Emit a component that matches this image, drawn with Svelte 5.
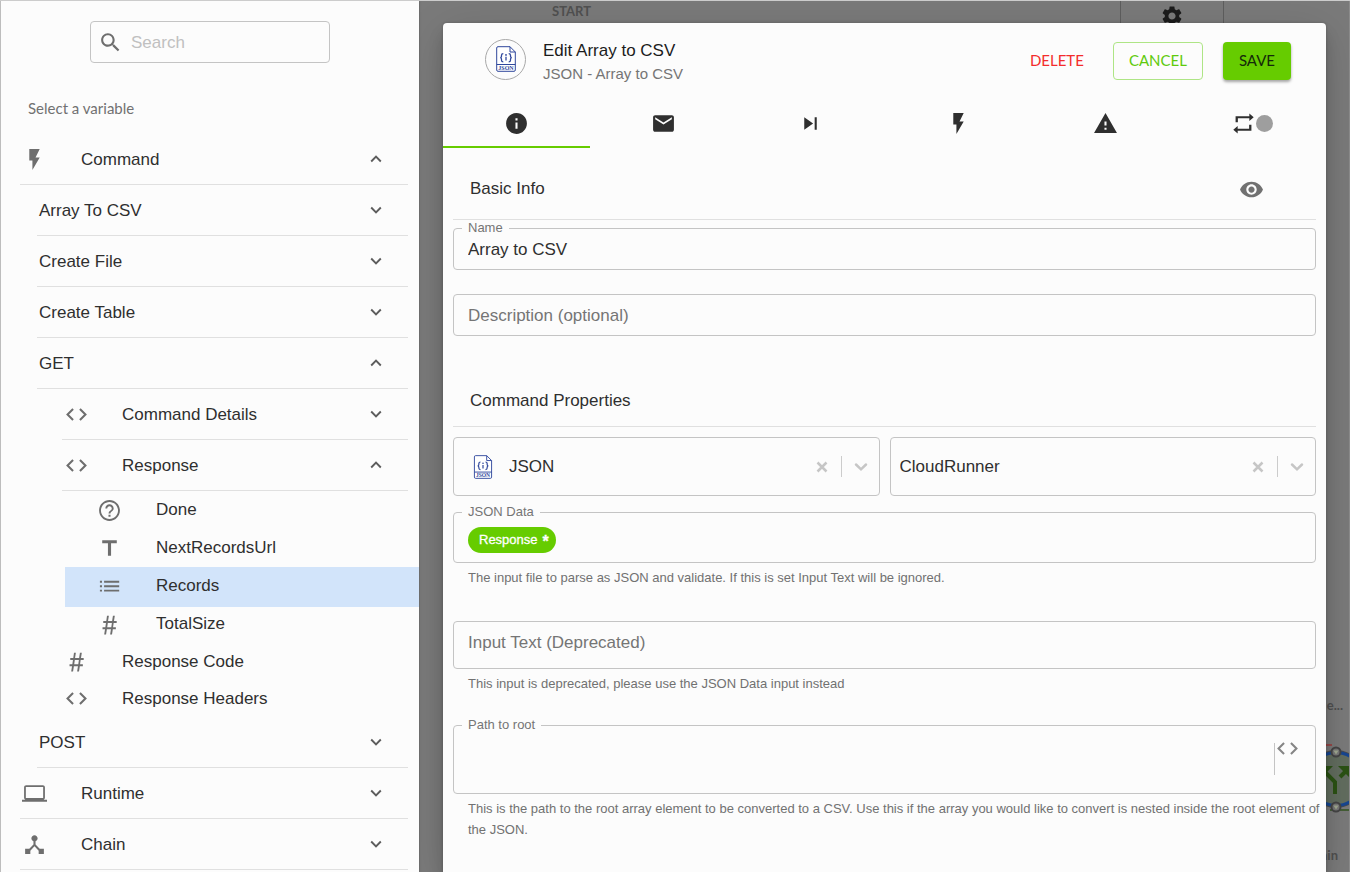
<script>
  const icons = {
    bolt: 'M7 2v11h3v9l7-12h-4l4-8z',
    code: 'M9.4 16.6L4.8 12l4.6-4.6L8 6l-6 6 6 6 1.4-1.4zm5.2 0l4.6-4.6-4.6-4.6L16 6l6 6-6 6-1.4-1.4z',
    help: 'M11 18h2v-2h-2v2zm1-16C6.48 2 2 6.48 2 12s4.48 10 10 10 10-4.48 10-10S17.52 2 12 2zm0 18.2c-4.53 0-8.2-3.67-8.2-8.2S7.47 3.8 12 3.8s8.2 3.67 8.2 8.2-3.67 8.2-8.2 8.2zM12 6c-2.21 0-4 1.79-4 4h1.8c0-1.2 1-2.2 2.2-2.2s2.2 1 2.2 2.2c0 2-3.1 1.85-3.1 5h1.8c0-2.25 3.1-2.5 3.1-5 0-2.21-1.79-4-4-4z',
    title: 'M5 4v3h5.5v12h3V7H19V4z',
    list: 'M2.800 6.400h2v1.900h-2zM2.800 10.700h2v1.900h-2zM2.800 15h2v1.900h-2zM6.800 6.400h14.500v1.900H6.800zM6.800 10.700h14.500v1.900H6.800zM6.800 15h14.500v1.900H6.800z',
    hash: 'M9.600 3.500h1.800L10.600 8.700h3.900l.8-5.200h1.800L16.300 8.700h2.600v1.800h-2.900l-.6 4.200h2.700v1.800h-2.900l-.8 5h-1.800l.8-5H9.500l-.8 5H6.900l.8-5H5.300v-1.800H8l.6-4.200H6V8.700h2.900zM10.400 10.500l-.6 4.200h3.900l.6-4.200z',
    laptop: 'M20 18c1.100 0 2-.9 2-2V6c0-1.100-.9-2-2-2H4c-1.100 0-2 .9-2 2v10c0 1.100.9 2 2 2H0v2h24v-2h-4zM3.700 5.700h16.600v10.600H3.700z',
    hub: 'M17 16l-4-4V8.820C14.160 8.400 15 7.300 15 6c0-1.660-1.340-3-3-3S9 4.340 9 6c0 1.300.84 2.400 2 2.820V12l-4 4H3v5h5v-3.050l4-4.200 4 4.200V21h5v-5h-4z',
    search: 'M15.5 14h-.79l-.28-.27C15.410 12.590 16 11.110 16 9.500 16 5.910 13.090 3 9.500 3S3 5.910 3 9.500 5.910 16 9.500 16c1.610 0 3.090-.59 4.230-1.570l.27.28v.79l5 4.990L20.490 19l-4.990-5zm-6 0C7.010 14 5 11.990 5 9.500S7.010 5 9.500 5 14 7.010 14 9.500 11.990 14 9.500 14z',
    info: 'M12 2C6.480 2 2 6.480 2 12s4.480 10 10 10 10-4.480 10-10S17.520 2 12 2zm1 15h-2v-6h2v6zm0-8h-2V7h2v2z',
    mail: 'M20 4H4c-1.100 0-2 .9-2 2v12c0 1.100.9 2 2 2h16c1.100 0 2-.9 2-2V6c0-1.100-.9-2-2-2zm0 4l-8 5-8-5V6l8 5 8-5v2z',
    next: 'M6 18l8.500-6L6 6v12zM16 6v12h2V6h-2z',
    warning: 'M1 21h22L12 2 1 21zm12-3h-2v-2h2v2zm0-4h-2v-4h2v4z',
    repeat: 'M4.400 10.800V5h13.200V2.300L21.800 6l-4.200 3.700V7H6.600v3.800zM19.600 13.200V19H6.400v2.700L2.200 18l4.200-3.700V17h11v-3.800z',
    eye: 'M12 4.500C7 4.500 2.730 7.610 1 12c1.730 4.390 6 7.500 11 7.500s9.270-3.110 11-7.500c-1.730-4.390-6-7.500-11-7.500zM12 17c-2.760 0-5-2.240-5-5s2.240-5 5-5 5 2.240 5 5-2.240 5-5 5zm0-8c-1.660 0-3 1.340-3 3s1.340 3 3 3 3-1.340 3-3-1.340-3-3-3z',
    gear: 'M19.140 12.940c.04-.3.06-.61.06-.94 0-.32-.02-.64-.07-.94l2.030-1.580c.18-.14.23-.41.12-.61l-1.920-3.320c-.12-.22-.37-.29-.59-.22l-2.390.96c-.5-.38-1.030-.7-1.620-.94l-.36-2.540c-.04-.24-.24-.41-.48-.41h-3.840c-.24 0-.43.17-.47.41l-.36 2.540c-.59.24-1.130.57-1.620.94l-2.390-.96c-.22-.08-.47 0-.59.22L2.740 8.870c-.12.21-.08.47.12.61l2.030 1.580c-.05.3-.09.63-.09.94s.02.64.07.94l-2.030 1.580c-.18.14-.23.41-.12.61l1.920 3.320c.12.22.37.29.59.22l2.390-.96c.5.38 1.030.7 1.620.94l.36 2.540c.05.24.24.41.48.41h3.840c.24 0 .44-.17.47-.41l.36-2.540c.59-.24 1.130-.56 1.620-.94l2.390.96c.22.08.47 0 .59-.22l1.920-3.320c.12-.22.07-.47-.12-.61l-2.010-1.580zM12 15.600c-1.980 0-3.600-1.620-3.600-3.600s1.620-3.600 3.600-3.600 3.600 1.620 3.600 3.600-1.620 3.600-3.600 3.600z'
  };

  let rows = $state([
    { text: 'Command', level: 0, icon: 'bolt', open: true },
    { text: 'Array To CSV', level: 1, open: false },
    { text: 'Create File', level: 1, open: false },
    { text: 'Create Table', level: 1, open: false },
    { text: 'GET', level: 1, open: true },
    { text: 'Command Details', level: 2, icon: 'code', open: false },
    { text: 'Response', level: 2, icon: 'code', open: true },
    { text: 'Done', level: 3, icon: 'help', leaf: true },
    { text: 'NextRecordsUrl', level: 3, icon: 'title', leaf: true },
    { text: 'Records', level: 3, icon: 'list', leaf: true },
    { text: 'TotalSize', level: 3, icon: 'hash', leaf: true },
    { text: 'Response Code', level: 2, icon: 'hash', leaf: true },
    { text: 'Response Headers', level: 2, icon: 'code', leaf: true },
    { text: 'POST', level: 1, open: false },
    { text: 'Runtime', level: 0, icon: 'laptop', open: false },
    { text: 'Chain', level: 0, icon: 'hub', open: false }
  ]);

  const tabs = [
    { icon: 'info', label: 'Info' },
    { icon: 'mail', label: 'Messages' },
    { icon: 'next', label: 'Next step' },
    { icon: 'bolt', label: 'Triggers' },
    { icon: 'warning', label: 'Errors' },
    { icon: 'repeat', label: 'Iteration' }
  ];

  let selected = $state('Records');
  let activeTab = $state('info');
  let name = $state('Array to CSV');
</script>

{#snippet icon(key)}
  <svg class="icon" viewBox="0 0 24 24" aria-hidden="true"><path d={icons[key]} fill-rule="evenodd" /></svg>
{/snippet}

{#snippet chevron(up)}
  <svg class="chevron" viewBox="0 0 12 8" aria-hidden="true"><path d={up ? 'M1.200 6.500L6 1.700l4.800 4.800' : 'M1.200 1.500L6 6.300l4.800-4.800'} /></svg>
{/snippet}

{#snippet jsonFile()}
  <svg class="json-file" viewBox="0 0 20 26" aria-hidden="true">
    <path d="M2 .7h12l5.300 5.300v18q0 1.300-1.300 1.300H2Q.7 25.300.7 24V2Q.7.7 2 .7z" fill="#fff" />
    <path d="M14 .7V6h5.300M.7 18.500h18.600" fill="none" />
    <path d="M7.300 7.600q-1.800 0-1.800 1.600v1q0 1.300-1.200 1.500 1.200.2 1.200 1.500v1q0 1.600 1.800 1.600M12.700 7.600q1.800 0 1.800 1.600v1q0 1.300 1.200 1.500-1.200.2-1.200 1.500v1q0 1.600-1.800 1.600M10 10.800v3.800" fill="none" stroke-width="1.300" />
    <circle cx="10" cy="8.900" r=".9" fill="#2f479c" stroke="none" />
    <text x="10" y="24" text-anchor="middle">JSON</text>
  </svg>
{/snippet}

{#snippet selectTail(label)}
  <button class="clear" type="button" aria-label="Clear {label}">
    <svg viewBox="0 0 12 12" aria-hidden="true"><path d="M1.500 1.500l9 9M10.500 1.500l-9 9" /></svg>
  </button>
  <span class="bar"></span>
  <svg class="drop" viewBox="0 0 14 10" aria-hidden="true"><path d="M2 2.500l5 4.800 5-4.800" /></svg>
{/snippet}

<div class="app">
  <aside class="drawer">
    <label class="search">
      {@render icon('search')}
      <input type="search" placeholder="Search" aria-label="Search" />
    </label>
    <h2>Select a variable</h2>
    <ul class="tree">
      {#each rows as row}
        <li class="level-{row.level}" class:leaf={row.leaf} class:selected={row.leaf && row.text === selected}>
          <button type="button" aria-expanded={row.leaf ? undefined : row.open} onclick={() => row.leaf ? (selected = row.text) : (row.open = !row.open)}>
            {#if row.icon}<span class="glyph">{@render icon(row.icon)}</span>{/if}
            <span class="name">{row.text}</span>
            {#if !row.leaf}{@render chevron(row.open)}{/if}
          </button>
        </li>
      {/each}
    </ul>
  </aside>

  <main>
    <div class="canvas">
      <span class="node-label start">START</span>
      <div class="toolbar">{@render icon('gear')}</div>
      <span class="node-label upper">e...</span>
      <svg class="node" viewBox="0 0 80 80" aria-hidden="true">
        <path d="M0 8h28" stroke="#954848" stroke-width="2" />
        <path d="M26 73h54" stroke="#445e35" stroke-width="2" />
        <circle cx="32" cy="42" r="28" fill="#626d5f" stroke="#4c4c4c" stroke-width="2" />
        <circle cx="32" cy="42" r="26.500" fill="none" stroke="#174691" stroke-width="3" />
        <path d="M31 57V45L20 34M36 40l7-7" fill="none" stroke="#2b5214" stroke-width="4" />
        <path d="M17 29h12L17 41zM34 29h11v11z" fill="#2b5214" />
        <g fill="#777" stroke="#454545" stroke-width="2"><circle cx="32" cy="15" r="4.500" /><circle cx="32" cy="70" r="4.500" /></g>
        <path d="M29.500 13.500h5L32 17.500zM29.500 68.500h5L32 72.500z" fill="#a0a890" />
      </svg>
      <span class="node-label lower">ain</span>
    </div>

    <section class="dialog" role="dialog" aria-labelledby="dialog-title">
      <header>
        <span class="avatar">{@render jsonFile()}</span>
        <div class="titles">
          <h1 id="dialog-title">Edit Array to CSV</h1>
          <p>JSON - Array to CSV</p>
        </div>
        <div class="actions">
          <button class="delete" type="button">DELETE</button>
          <button class="cancel" type="button">CANCEL</button>
          <button class="save" type="submit">SAVE</button>
        </div>
      </header>

      <div class="tabs" role="tablist">
        {#each tabs as tab}
          <button type="button" role="tab" aria-label={tab.label} aria-selected={activeTab === tab.icon} onclick={() => (activeTab = tab.icon)}>
            {@render icon(tab.icon)}
            {#if tab.icon === 'repeat'}<span class="dot"></span>{/if}
          </button>
        {/each}
      </div>

      <form>
        <div class="section-head">
          <h2>Basic Info</h2>
          <button class="plain" type="button" aria-label="Preview">{@render icon('eye')}</button>
        </div>
        <div class="field name-field">
          <label for="name">Name</label>
          <input id="name" type="text" bind:value={name} />
        </div>
        <div class="field desc-field">
          <input type="text" placeholder="Description (optional)" aria-label="Description (optional)" />
        </div>

        <div class="section-head second"><h2>Command Properties</h2></div>
        <div class="selects">
          <div class="field combo with-icon">
            {@render jsonFile()}
            <select aria-label="Connector"><option>JSON</option></select>
            {@render selectTail('connector')}
          </div>
          <div class="field combo">
            <select aria-label="Runner"><option>CloudRunner</option></select>
            {@render selectTail('runner')}
          </div>
        </div>

        <div class="field data-field">
          <label for="json-data">JSON Data</label>
          <span class="chip">Response <b>*</b></span>
          <input id="json-data" type="text" />
        </div>
        <p class="helper">The input file to parse as JSON and validate. If this is set Input Text will be ignored.</p>

        <div class="field text-field">
          <input type="text" placeholder="Input Text (Deprecated)" aria-label="Input Text (Deprecated)" />
        </div>
        <p class="helper">This input is deprecated, please use the JSON Data input instead</p>

        <div class="field path-field">
          <label for="path">Path to root</label>
          <textarea id="path"></textarea>
          <button class="plain" type="button" aria-label="Insert variable">{@render icon('code')}</button>
        </div>
        <p class="helper">This is the path to the root array element to be converted to a CSV. Use this if the array you would like to convert is nested inside the root element of the JSON.</p>
      </form>
    </section>
  </main>
</div>

<style>
  :global(body) { margin: 0; }
  .app, .app * { box-sizing: border-box; }
  .app {
    display: flex;
    min-height: 100vh;
    overflow: hidden;
    color: #2f2f2f;
    background: #787878;
    border-top: 1px solid #ccc;
    font: 17px/20px "Liberation Sans", Arial, sans-serif;
  }
  h1, h2, p, ul { margin: 0; padding: 0; font-weight: 400; font-size: 17px; }
  ul { list-style: none; }
  button, input, select, textarea {
    margin: 0; padding: 0; border: 0; outline: 0; background: none;
    color: inherit; font: inherit; min-width: 0;
  }
  button { cursor: pointer; }
  .icon { display: block; flex: none; width: 25px; height: 25px; fill: currentColor; }

  .drawer {
    flex: none;
    width: 419px;
    padding-top: 20px;
    background: #fcfcfc;
    border-left: 1px solid #bdbdbd;
    box-shadow: 0 0 2px #555;
    z-index: 1;
  }
  .search {
    display: flex;
    align-items: center;
    gap: 8px;
    width: 240px;
    height: 42px;
    margin-left: 89px;
    padding: 0 7px;
    border: 1px solid #c4c4c4;
    border-radius: 4px;
    color: #6e6e6e;
  }
  .search input { flex: 1; padding-top: 1px; appearance: none; }
  .search input::placeholder { color: #c0c0c0; opacity: 1; }
  .drawer h2 { margin: 35px 0 16px 27px; font: 15px/20px Lato, sans-serif; color: #717171; }

  .tree li { display: flex; height: 51px; margin-right: 11px; border-bottom: 1px solid #e0e0e0; }
  .tree button { display: flex; align-items: center; flex: 1; padding-right: 26px; text-align: left; }
  .tree .name { flex: 1; padding-top: 2px; }
  .glyph { display: flex; width: 59px; color: #6e6e6e; }
  .level-0 { margin-left: 19px; }
  .level-1 { margin-left: 36px; }
  .level-2 { margin-left: 61px; }
  .level-3 { margin-left: 64px; }
  .tree button { padding-left: 2px; }
  .level-2 .glyph { width: 58px; }
  .tree .level-3 button { padding-left: 32px; }
  .tree .leaf { height: 37px; margin-right: 0; border: 0; }
  .tree .leaf .name { padding-top: 0; }
  .tree .leaf.level-3 { height: 38px; }
  .tree .selected { background: #d2e4fa; box-shadow: 0 2px #d2e4fa; }
  .chevron { flex: none; width: 12px; height: 8px; fill: none; stroke: #5c5c5c; stroke-width: 1.900; }

  main { position: relative; display: flex; flex: 1; min-width: 0; padding: 22px 23px 0 24px; border-right: 1px solid #8c8c8c; }
  .canvas { position: absolute; inset: 0; overflow: hidden; background: #7a7a7a; }
  .node-label { position: absolute; font: 700 13px/16px Lato, sans-serif; color: #505050; }
  .start { left: 133px; top: 2px; }
  .upper { right: 6px; top: 696px; }
  .lower { right: 11px; top: 846px; }
  .toolbar {
    position: absolute; top: 0; right: 125px; width: 104px; height: 60px;
    display: flex; justify-content: center; padding-top: 3px;
    border: solid #5e5e5e; border-width: 0 1px; color: #1c1c1c;
  }
  .toolbar .icon { width: 24px; height: 24px; }
  .node { position: absolute; right: -35px; top: 736px; width: 80px; height: 80px; }

  .dialog {
    position: relative;
    flex: 1;
    min-width: 0;
    background: #fcfcfc;
    border-radius: 4px 4px 0 0;
    box-shadow: 0 11px 15px rgba(0, 0, 0, .16), 0 9px 46px rgba(0, 0, 0, .12), 0 0 3px rgba(0, 0, 0, .2);
  }
  header { display: flex; align-items: center; height: 76px; padding: 0 35px 0 42px; }
  .avatar {
    display: flex; align-items: center; justify-content: center;
    width: 41px; height: 41px; margin-right: 17px; margin-bottom: 4px;
    border: 1px solid #a8a8a8; border-radius: 50%;
  }
  .json-file { display: block; flex: none; width: 20px; height: 26px; stroke: #2f479c; stroke-width: 1; }
  .json-file text { font: 700 6px "Liberation Serif", serif; fill: #2f479c; stroke: none; }
  .titles { flex: 1; padding-top: 1px; }
  .titles h1 { line-height: 24px; color: #1c1c1c; }
  .titles p { font-size: 15px; line-height: 22px; color: #757575; }
  .actions { display: flex; gap: 20px; }
  .actions button { height: 38px; padding: 0 15px 2px; border: 1px solid transparent; border-radius: 4px; font: 15px/20px Lato, sans-serif; }
  .actions .delete { color: #f32c2c; padding: 0 8px 2px; }
  .actions .cancel { color: #5fca0c; border-color: #aee585; }
  .actions .save { color: #14290a; background: #66cc00; box-shadow: 0 2px 3px rgba(0, 0, 0, .35); }

  .tabs { display: grid; grid-template-columns: repeat(6, 1fr); height: 49px; }
  .tabs button { display: flex; align-items: center; justify-content: center; padding-top: 2px; border-bottom: 2px solid transparent; }
  .tabs [aria-selected="true"] { border-color: #66cc00; }
  .dot { width: 17px; height: 17px; border-radius: 50%; background: #9e9e9e; }

  form { padding: 0 10px; }
  .section-head { display: flex; align-items: center; justify-content: space-between; height: 72px; padding: 11px 52px 0 17px; border-bottom: 1px solid #e0e0e0; }
  .section-head.second { height: 52px; margin-top: 39px; padding-top: 1px; }
  .plain { color: #717171; }
  .field { position: relative; display: flex; align-items: center; padding: 0 14px; border: 1px solid #c4c4c4; border-radius: 4px; }
  .field label { position: absolute; top: -9px; left: 8px; padding: 0 6px; background: #fcfcfc; color: #757575; font-size: 13px; line-height: 16px; }
  .field input, .field select, .field textarea { flex: 1; align-self: stretch; appearance: none; resize: none; }
  .field input { padding-top: 2px; }
  .field input::placeholder { color: #757575; opacity: 1; }
  .name-field { height: 42px; margin-top: 8px; }
  .desc-field { height: 42px; margin-top: 24px; }
  .selects { display: grid; grid-template-columns: 1fr 1fr; gap: 10px; margin-top: 10px; }
  .combo { height: 59px; padding: 0 11px 0 9px; }
  .combo.with-icon { padding-left: 19px; }
  .combo .json-file { height: 24px; margin-right: 16px; }
  .clear { display: flex; padding: 4px; }
  .clear svg { width: 12px; height: 12px; fill: none; stroke: #c6c6c6; stroke-width: 2.500; }
  .bar { width: 1px; height: 21px; margin: 0 12px 0 9px; background: #ccc; }
  .drop { width: 14px; height: 10px; fill: none; stroke: #c6c6c6; stroke-width: 2.500; stroke-linecap: round; }
  .data-field { height: 51px; margin-top: 16px; }
  .chip { display: flex; gap: 5px; height: 26px; margin-top: 4px; padding: 0 7px 0 11px; border-radius: 13px; background: #66cc00; color: #fff; font-size: 13px; line-height: 26px; -webkit-text-stroke: 0.3px #fff; }
  .chip b { font-size: 16px; line-height: 29px; }
  .helper { margin-right: -10px; padding: 4px 0 0 15px; font-size: 13px; line-height: 21px; color: #717171; }
  .text-field { height: 48px; margin-top: 33px; padding-bottom: 6px; }
  .path-field { height: 69px; margin-top: 31px; padding-right: 15px; }
  .path-field .plain { align-self: flex-start; height: 32px; margin-top: 17px; border-left: 1px solid #c4c4c4; color: #858585; }
  .path-field .plain .icon { margin-top: -21px; }
</style>
